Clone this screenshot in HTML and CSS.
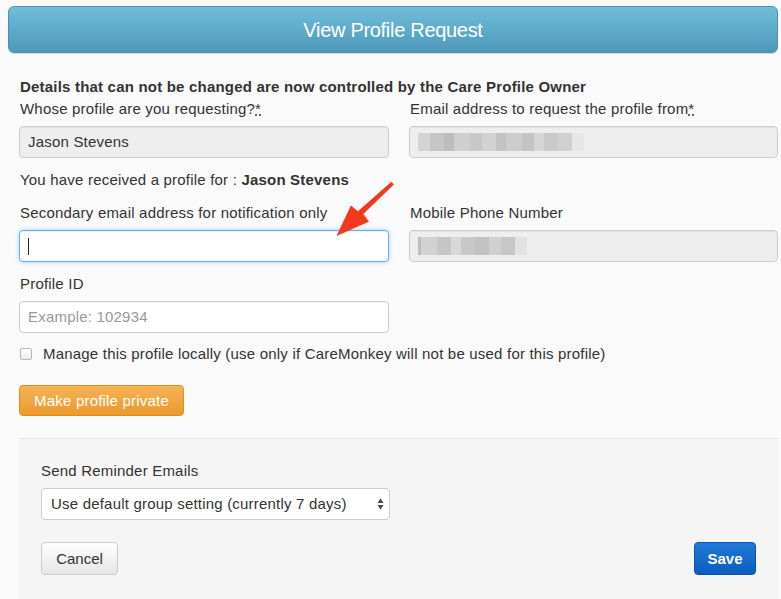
FILE: index.html
```html
<!DOCTYPE html>
<html lang="en">

<head>
    <meta charset="UTF-8">
    <title>View Profile Request</title>
    <link rel="stylesheet" href="styles.css">
</head>

<body>
    <div class="page">
        <header class="title-bar">View Profile Request</header>

        <form class="request-form">
            <p class="notice">Details that can not be changed are now controlled by the Care Profile Owner</p>

            <div class="row">
                <div class="field">
                    <label>Whose profile are you requesting?<abbr>*</abbr></label>
                    <div class="input locked">Jason Stevens</div>
                </div>
                <div class="field">
                    <label>Email address to request the profile from<abbr>*</abbr></label>
                    <div class="input locked">
                        <span class="blur">
                            <i style="width:12px;background:#d4d4d4"></i><i style="width:14px;background:#c6c6c6"></i><i style="width:10px;background:#bdbdbd"></i><i style="width:16px;background:#cfcfcf"></i><i style="width:12px;background:#c8c8c8"></i><i style="width:14px;background:#d2d2d2"></i><i style="width:10px;background:#c3c3c3"></i><i style="width:16px;background:#cdcdcd"></i><i style="width:12px;background:#c4c4c4"></i><i style="width:10px;background:#d6d6d6"></i><i style="width:14px;background:#c9c9c9"></i><i style="width:14px;background:#d0d0d0"></i><i style="width:12px;background:#e6e6e6"></i>
                        </span>
                    </div>
                </div>
            </div>

            <p class="received">You have received a profile for : <strong>Jason Stevens</strong></p>

            <div class="row">
                <div class="field">
                    <label>Secondary email address for notification only</label>
                    <div class="input focused"><span class="caret"></span></div>
                </div>
                <div class="field">
                    <label>Mobile Phone Number</label>
                    <div class="input locked">
                        <span class="blur">
                            <i style="width:3px;background:#bdbdbd"></i><i style="width:16px;background:#d2d2d2"></i><i style="width:14px;background:#c6c6c6"></i><i style="width:10px;background:#d8d8d8"></i><i style="width:14px;background:#c8c8c8"></i><i style="width:14px;background:#c2c2c2"></i><i style="width:12px;background:#d0d0d0"></i><i style="width:14px;background:#c7c7c7"></i><i style="width:12px;background:#e2e2e2"></i>
                        </span>
                    </div>
                </div>
            </div>

            <div class="row">
                <div class="field">
                    <label>Profile ID</label>
                    <div class="input placeholder">Example: 102934</div>
                </div>
            </div>

            <div class="check-row">
                <span class="checkbox"></span>
                <span>Manage this profile locally (use only if CareMonkey will not be used for this profile)</span>
            </div>

            <div class="private-row">
                <button type="button" class="btn btn-warning">Make profile private</button>
            </div>

            <div class="footer">
                <label>Send Reminder Emails</label>
                <div class="select">
                    <span>Use default group setting (currently 7 days)</span>
                    <svg width="7" height="12" viewBox="0 0 7 12">
                        <path d="M3.5 0.5 L6.5 5 L0.5 5 Z M3.5 11.5 L6.5 7 L0.5 7 Z" fill="#444" />
                    </svg>
                </div>
                <div class="actions">
                    <button type="button" class="btn btn-default">Cancel</button>
                    <button type="button" class="btn btn-primary">Save</button>
                </div>
            </div>
        </form>

        <svg class="arrow" width="70" height="66" viewBox="0 0 70 66">
            <path d="M66.5 1 L68.5 3.5 L38 33 L43.5 40.5 L12 54.5 L26 25 L33 30.5 Z" fill="#f2391e" stroke="#e8301a" stroke-width="0.6" stroke-linejoin="round" />
        </svg>
    </div>
</body>

</html>
```

FILE: styles.css
```css
html,
body {
    margin: 0;
    padding: 0;
    background: #fafafa;
}

body {
    font-family: "Liberation Sans", Arial, Helvetica, sans-serif;
    font-size: 15px;
    letter-spacing: 0.2px;
    line-height: 20px;
    color: #333;
}

.page {
    position: relative;
    height: 599px;
    overflow: hidden;
    padding: 6px 3px 0 8px;
    box-sizing: border-box;
}

.title-bar {
    height: 47px;
    box-sizing: border-box;
    border: 1px solid #4b91b1;
    border-radius: 6px;
    background: linear-gradient(to bottom, #70bedb, #4e98b9);
    color: #fff;
    font-size: 20px;
    letter-spacing: -0.3px;
    display: flex;
    align-items: center;
    justify-content: center;
    box-shadow: 0 1px 1px rgba(0, 0, 0, 0.15);
}

.request-form {
    padding-left: 11px;
    margin-top: 24px;
}

.notice {
    margin: 0 0 2px 1px;
    font-weight: bold;
}

.row {
    display: grid;
    grid-template-columns: 370px 369px;
    gap: 20px;
}

.field label {
    display: block;
    margin: 0 0 7px 1px;
}

abbr {
    text-decoration: underline dotted;
}

.input {
    height: 32px;
    box-sizing: border-box;
    border: 1px solid #ccc;
    border-radius: 4px;
    background: #fff;
    padding: 0 8px;
    display: flex;
    align-items: center;
    box-shadow: inset 0 1px 1px rgba(0, 0, 0, 0.05);
}

.input.locked {
    background: #eee;
}

.input.focused {
    border-color: #66afe9;
    box-shadow: inset 0 1px 1px rgba(0, 0, 0, 0.07), 0 0 4px rgba(102, 175, 233, 0.6);
}

.input.placeholder {
    color: #999;
}

.caret {
    width: 1px;
    height: 17px;
    background: #222;
}

.blur {
    display: flex;
    height: 18px;
    background: linear-gradient(to bottom, #dadada 50%, #e2e2e2 50%);
}

.blur i {
    display: block;
    height: 100%;
}

.received {
    margin: 12px 0 13px 1px;
}

.received + .row {
    margin-bottom: 12px;
}

.check-row {
    display: flex;
    align-items: center;
    gap: 11px;
    margin: 11px 0 0 1px;
}

.checkbox {
    width: 10px;
    height: 10px;
    border: 1px solid #b5b5b5;
    border-radius: 2px;
    background: linear-gradient(to bottom, #fff, #ececec);
}

.private-row {
    margin-top: 21px;
}

.btn {
    font-family: inherit;
    font-size: 15px;
    border-radius: 4px;
    height: 31px;
    padding: 0 10px;
    cursor: pointer;
}

.btn-warning {
    color: #fff;
    background: linear-gradient(to bottom, #f6b256, #ec9a2c);
    border: 1px solid #e08e1b;
    width: 165px;
    letter-spacing: 0.2px;
}

.footer {
    margin-top: 22px;
    border-top: 1px solid #e4e4e4;
    background: #f5f5f5;
    padding: 22px 0 30px 22px;
    height: 200px;
}

.footer label {
    display: block;
    margin-bottom: 7px;
}

.select {
    width: 349px;
    height: 32px;
    box-sizing: border-box;
    background: #fff;
    border: 1px solid #ccc;
    border-radius: 4px;
    display: flex;
    align-items: center;
    justify-content: space-between;
    padding: 0 5px 0 9px;
}

.actions {
    display: flex;
    justify-content: space-between;
    margin-top: 22px;
    padding-right: 22px;
}

.btn-default {
    color: #333;
    background: linear-gradient(to bottom, #fff, #e6e6e6);
    border: 1px solid #ccc;
    width: 77px;
    height: 33px;
}

.btn-primary {
    color: #fff;
    font-weight: bold;
    background: linear-gradient(to bottom, #1e7ad6, #0b5cbf);
    border: 1px solid #0a55b0;
    width: 62px;
    height: 33px;
}

.arrow {
    position: absolute;
    left: 325px;
    top: 181px;
}
```
